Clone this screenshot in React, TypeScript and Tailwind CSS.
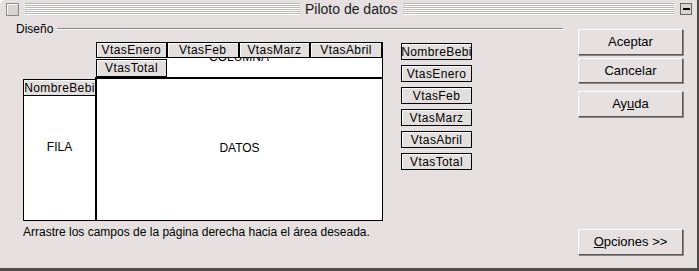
import React from "react";

const font = { fontFamily: '"Liberation Sans", Arial, sans-serif' };

const Field: React.FC<{ label: string; className?: string }> = ({ label, className = "" }) => (
  <div
    className={`flex items-center justify-center border border-black bg-[#e4dfdf] shadow-[inset_1px_1px_0_#ffffff] text-[12px] leading-none text-black tracking-[0.4px] ${className}`}
  >
    {label}
  </div>
);

const Btn: React.FC<{ children: React.ReactNode; className?: string }> = ({ children, className = "" }) => (
  <div
    className={`w-[105px] flex items-center justify-center border border-t-white border-l-white border-b-[#5a5656] border-r-[#5a5656] shadow-[1px_1px_0_#8a8686] bg-[#e6e0e0] text-[13px] text-black ${className}`}
  >
    {children}
  </div>
);

const Stripes: React.FC<{ className?: string }> = ({ className = "" }) => (
  <div
    className={`h-[12px] bg-[repeating-linear-gradient(to_bottom,#bdb8b8_0px,#bdb8b8_1px,#ffffff_1px,#ffffff_2px)] ${className}`}
  />
);

const fields = ["NombreBebi", "VtasEnero", "VtasFeb", "VtasMarz", "VtasAbril", "VtasTotal"];

export default function App() {
  return (
    <div style={font} className="w-[699px] h-[271px] overflow-hidden bg-white">
      <div className="w-[699px] h-[271px] bg-[#e6e0e0] border-r-2 border-b-[3px] border-[#4e4a4a] rounded-tl-[5px] flex flex-col">
        {/* title bar */}
        <div className="h-[18px] flex items-center pl-[6px] pr-[5px]">
          <div className="w-[13px] h-[13px] border border-[#8c8888] bg-[#d8d2d2] shadow-[inset_1px_1px_0_#ffffff]" />
          <Stripes className="ml-[6px] w-[275px]" />
          <span className="mx-[5px] text-[14px] leading-none text-[#1a1a1a]">Piloto de datos</span>
          <Stripes className="flex-1" />
          <div className="ml-[6px] w-[12px] h-[12px] border border-[#6a6666] bg-[#d8d2d2] flex items-center justify-center">
            <div className="w-[7px] h-[2px] bg-black" />
          </div>
        </div>

        <div className="flex flex-1 pl-[16px]">
          {/* left: design */}
          <div className="w-[547px] flex flex-col">
            <div className="mt-[4px] h-[14px] flex items-center">
              <span className="text-[12px] leading-none text-black">Diseño</span>
              <div className="ml-[4px] flex-1 h-[2px] border-t border-[#8a8686] border-b border-b-white" />
            </div>

            <div className="mt-[6px] flex">
              <div className="ml-[7px] w-[360px] flex flex-col">
                {/* column area */}
                <div className="ml-[73px] w-[287px] h-[35px] bg-white border-r border-black relative">
                  <span className="absolute left-0 right-0 top-[9px] text-center text-[12px] leading-none text-black">
                    COLUMNA
                  </span>
                  <div className="relative flex">
                    <Field label="VtasEnero" className="w-[71px] h-[16px]" />
                    <Field label="VtasFeb" className="w-[72px] h-[16px]" />
                    <Field label="VtasMarz" className="w-[72px] h-[16px]" />
                    <Field label="VtasAbril" className="w-[72px] h-[16px]" />
                  </div>
                  <Field label="VtasTotal" className="relative mt-[1px] w-[71px] h-[18px]" />
                </div>

                {/* row + data */}
                <div className="flex items-start">
                  <div className="mt-[2px] w-[72px] h-[142px] bg-white border border-r-0 border-black flex flex-col">
                    <Field label="NombreBebi" className="-mt-px -ml-px w-[73px] h-[17px]" />
                    <div className="flex-1 flex items-center justify-center text-[12px] text-black pb-[22px]">FILA</div>
                  </div>
                  <div className="w-[288px] h-[144px] bg-white border-t-2 border-l-2 border-r border-b border-black flex items-center justify-center text-[12px] text-black pb-[4px]">
                    DATOS
                  </div>
                </div>

                <div className="mt-[5px] text-[12px] leading-none text-black whitespace-nowrap">
                  Arrastre los campos de la página derecha hacia el área deseada.
                </div>
              </div>

              {/* field list */}
              <div className="ml-[18px] mt-[1px] flex flex-col gap-[5px]">
                {fields.map((f) => (
                  <Field key={f} label={f} className="w-[71px] h-[17px]" />
                ))}
              </div>
            </div>
          </div>

          {/* buttons */}
          <div className="ml-[15px] flex flex-col">
            <Btn className="mt-[11px] h-[26px]">Aceptar</Btn>
            <Btn className="mt-[3px] h-[25px]">Cancelar</Btn>
            <Btn className="mt-[8px] h-[26px]">
              <span>
                Ay<span className="underline">u</span>da
              </span>
            </Btn>
            <Btn className="mt-[112px] h-[26px]">
              <span>
                <span className="underline">O</span>pciones &gt;&gt;
              </span>
            </Btn>
          </div>
        </div>
      </div>
    </div>
  );
}
